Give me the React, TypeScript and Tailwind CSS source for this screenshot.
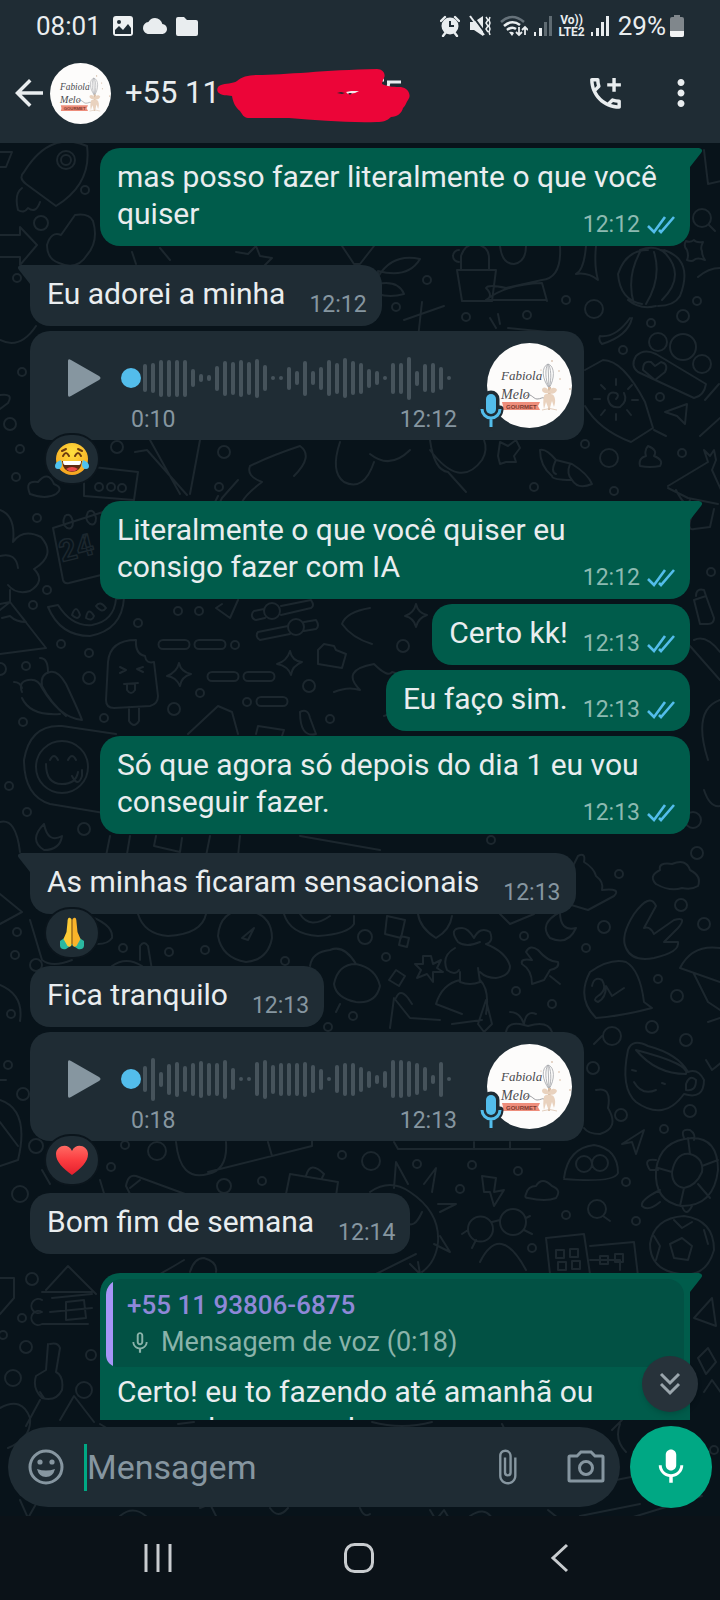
import React, { memo } from "react";
import clsx from "clsx";
import {
  MdArrowBack,
  MdAttachFile,
  MdCloud,
  MdMic,
  MdMicNone,
  MdMoreVert,
  MdOutlineAddIcCall,
} from "react-icons/md";

type Reaction = "laugh" | "pray" | "heart";

interface Message {
  id: number;
  out?: boolean;
  text?: string;
  time: string;
  tail?: boolean;
  gap: "tight" | "wide" | "afterReaction" | "turnAfterReaction";
  voice?: { duration: string; bars: number[] };
  quote?: { author: string; text: string };
  reaction?: Reaction;
}

const messages: Message[] = [
  { id: 1, out: true, tail: true, gap: "tight", text: "mas posso fazer literalmente o que você quiser", time: "12:12" },
  { id: 2, tail: true, gap: "wide", text: "Eu adorei a minha", time: "12:12" },
  {
    id: 3,
    gap: "tight",
    time: "12:12",
    voice: {
      duration: "0:10",
      bars: [28, 30, 37, 37, 37, 37, 18, 8, 6, 25, 35, 33, 37, 33, 39, 26, 4, 4, 23, 14, 35, 14, 23, 36, 31, 40, 34, 31, 19, 14, 4, 31, 31, 43, 15, 28, 30, 23, 4],
    },
    reaction: "laugh",
  },
  { id: 4, out: true, tail: true, gap: "turnAfterReaction", text: "Literalmente o que você quiser eu consigo fazer com IA", time: "12:12" },
  { id: 5, out: true, gap: "tight", text: "Certo kk!", time: "12:13" },
  { id: 6, out: true, gap: "tight", text: "Eu faço sim.", time: "12:13" },
  { id: 7, out: true, gap: "tight", text: "Só que agora só depois do dia 1 eu vou conseguir fazer.", time: "12:13" },
  { id: 8, tail: true, gap: "wide", text: "As minhas ficaram sensacionais", time: "12:13", reaction: "pray" },
  { id: 9, gap: "afterReaction", text: "Fica tranquilo", time: "12:13" },
  {
    id: 10,
    gap: "tight",
    time: "12:13",
    voice: {
      duration: "0:18",
      bars: [26, 43, 15, 31, 35, 26, 33, 37, 33, 33, 39, 22, 4, 4, 34, 39, 29, 33, 33, 33, 35, 28, 21, 4, 28, 33, 33, 25, 17, 9, 17, 38, 38, 36, 32, 24, 9, 35, 4],
    },
    reaction: "heart",
  },
  { id: 11, gap: "afterReaction", text: "Bom fim de semana", time: "12:14" },
  {
    id: 12,
    out: true,
    tail: true,
    gap: "wide",
    quote: { author: "+55 11 93806-6875", text: "Mensagem de voz (0:18)" },
    text: "Certo! eu to fazendo até amanhã ou segunda eu mando",
    time: "12:14",
  },
];

const gapClass = {
  tight: "mt-[5px]",
  wide: "mt-[19px]",
  afterReaction: "mt-[9px]",
  turnAfterReaction: "mt-[18px]",
};

/* ---------- wallpaper ---------- */

const smallDots = [
  [85, 190], [427, 280], [396, 307], [466, 317], [527, 315], [566, 300], [697, 301], [651, 323], [623, 350], [660, 397],
  [585, 444], [682, 453], [178, 611], [199, 611], [138, 623], [61, 644], [89, 653], [26, 666], [104, 718], [200, 693],
  [330, 719], [23, 722], [47, 590], [37, 518], [33, 605], [9, 786], [27, 812], [219, 487], [534, 487], [614, 491],
  [711, 572], [491, 840], [619, 874], [586, 948], [524, 936], [386, 957], [516, 991], [552, 1004], [658, 979],
  [664, 1129], [417, 1164], [472, 1165], [518, 1171], [460, 1189], [626, 1182], [566, 1215], [636, 1221], [532, 1248],
  [17, 278], [22, 372], [20, 449], [16, 477], [17, 932], [15, 955], [123, 948], [169, 952], [205, 950], [285, 961],
  [11, 1014], [353, 1016], [328, 1027], [8, 1065], [125, 1145], [342, 1155], [111, 1167], [262, 1181], [22, 1318],
  [714, 1450], [235, 645], [247, 702], [3, 1335],
];

const bigDots = [
  [41, 223, 7], [594, 309, 9], [683, 316, 6], [658, 342, 9], [683, 347, 13], [702, 364, 9], [609, 458, 9], [89, 678, 6],
  [174, 709, 6], [309, 686, 6], [84, 829, 6], [0, 669, 6], [403, 646, 6], [693, 820, 8], [697, 853, 6], [681, 905, 6],
  [704, 924, 6], [604, 927, 6], [365, 937, 7], [677, 996, 6], [652, 1027, 6], [686, 1040, 6], [593, 1068, 6],
  [621, 1115, 6], [690, 1111, 6], [371, 1161, 9], [117, 447, 6], [224, 452, 6], [10, 424, 6], [36, 965, 6], [23, 1094, 6],
  [36, 1146, 7], [157, 1151, 9], [224, 1186, 7], [20, 1194, 8], [32, 1279, 6], [13, 1378, 8], [84, 1390, 8], [91, 1355, 5],
  [26, 1347, 6],
];

const doodles = [
  // rocket and its flame
  "M24 172Q18 178 26 184L56 206Q92 184 87 146Q50 130 24 172M22 188q-8 6 -4 22q6 4 10 -2q8 6 12 -6",
  "M0 152h12l-6 15h-6M0 235h20v-8l17 18l-17 20v-8h-20M47 245q4 -14 14 -10l14 -20q14 -2 18 6q6 20 -6 34q-10 16 -28 8q-12 -4 -12 -18",
  "M132 252l4 12M160 248l10 12M236 252l12 2l8 -8l4 10l12 2l-8 8l2 8M342 246l12 18l6 0l14 -18",
  "M378 277q14 -24 42 -18q-12 20 -42 12zM378 284q20 -4 26 10q-14 4 -26 0",
  // cactus pot and reaching arm
  "M457 270h39l-4 31h-30zM461 270v-14q4 -12 14 -12q14 2 14 14v12M459 250a6 6 0 1 0 0 12M546 300h-60q20 -16 56 -17l5 18M560 246q2 32 -18 34l-36 8q-18 -4 -20 0q8 8 0 12",
  "M586 246q-2 24 -10 28q12 -2 22 6q-4 -14 -2 -34M500 246q2 18 14 18q12 -2 12 -18",
  // lantern
  "M648 250q-22 0 -30 24q2 26 24 30M640 252q-14 26 -6 52M654 252q8 26 -8 52M662 250q26 24 0 50M664 250q30 10 16 46q-6 10 -22 10M640 250q16 -6 26 4M628 300q12 10 28 6M630 318q-14 20 -30 18q-2 4 2 8q26 -8 30 -26",
  "M698 277q14 -12 30 -8M404 320l40 -14M422 302l-4 36M490 318l6 10M498 314l2 10M508 328l40 4",
  // mitten with a heart
  "M636 356q-6 10 2 16l56 26q10 -2 12 -14l-50 -30q-12 -6 -20 2M655 380l-12 -10q0 -10 8 -8l4 4l6 -4q8 2 4 10z",
  // kite with a spiral sun
  "M585 370l18 -10q20 0 42 42l8 26l-22 14q-32 -12 -46 -36M616 399q4 -4 0 -6q-8 -2 -8 6q2 10 12 8q8 -6 4 -14M616 385v-6M628 389l4 -4M632 400h6M627 410l4 5M616 414v6M605 410l-4 5M600 399h-6M605 389l-4 -4M654 430l12 6",
  "M665 412l22 -8l-2 20l-8 -8zM700 436l20 -18M705 400l14 -16",
  "M540 450q6 -2 16 10l16 4q16 10 20 20q-14 6 -20 -4q-20 0 -20 -4q-12 -10 -12 -26M556 460q-6 12 0 14M570 464q-4 10 2 16",
  "M640 466q-2 -8 6 -10q-2 -6 2 -10q10 4 6 10q10 4 6 10q-10 2 -20 0M668 486l40 -24l-4 -12l6 6l4 -6l2 10l-4 10l10 22",
  "M500 442l8 4l8 -6l4 8l-6 8l2 6l-10 0l-6 2l-2 -8z",
  "M340 442q-10 30 4 40q20 10 30 -20M430 450q30 40 52 10q6 -10 2 -20M410 450q-20 20 -40 4M430 440q4 30 18 32l18 20",
  // cake box and hands
  "M135 452l12 -2l40 45M150 440l30 54M200 440l-10 54M84 466l54 6l-4 28l-50 -4zM95 487a4 4 0 1 0 8 0a4 4 0 1 0 -8 0M107 487a4 4 0 1 0 8 0a4 4 0 1 0 -8 0M118 488a4 4 0 1 0 8 0a4 4 0 1 0 -8 0",
  "M250 466q20 -10 50 -20q14 10 -6 30M250 466q-4 10 12 16q-16 12 -20 20M0 395q14 -2 8 8l-8 6M0 340q20 10 36 -14",
  "M30 494q-6 -14 8 -12q10 -12 16 2q10 4 2 10q-10 6 -26 0",
  // calendar
  "M53 528l50 -16M53 528l10 52q1 4 6 3l36 -9M65 516q6 -4 8 6q0 8 -6 6q-6 -4 -2 -12M88 512q6 -4 8 6q0 8 -6 6q-6 -4 -2 -12",
  "M0 510q16 6 13 32q10 -14 28 -5q16 18 -7 32q12 12 -4 22q-14 4 -22 -6M0 556q16 -4 18 12M10 590v12",
  // watermelon and mountain
  "M48 607l10 -2q14 22 34 20q22 -4 24 -26l8 -1q-2 32 -34 38q-30 0 -42 -29M72 615q4 -12 8 0q-2 6 -8 0M86 618q2 -12 8 -2q-2 6 -8 2M96 606q4 -6 10 2q-4 6 -10 -2",
  "M0 604l10 -2l36 46l-46 6M10 602l-10 8M10 602l16 20q-10 0 -16 -6l-8 2",
  // popsicle
  "M136 640q-26 0 -28 22l-2 38q0 8 8 8l36 -2q8 -2 8 -10l-4 -34q-8 2 -9 -6q-10 -2 -9 -16zM129 707v14q5 8 10 0v-14M120 667l6 3l-6 3M143 667l-6 2l6 3M124 684l14 -1M127 684v6q4 6 8 0v-6",
  "M163 640h22a4 4 0 0 1 0 9h-22a4 4 0 0 1 0 -9M199 640h22a4 4 0 0 1 0 9h-22a4 4 0 0 1 0 -9M212 672h22a4 4 0 0 1 0 9h-22a4 4 0 0 1 0 -9M248 672h22a4 4 0 0 1 0 9h-22a4 4 0 0 1 0 -9M261 697h22a4 4 0 0 1 0 9h-22a4 4 0 0 1 0 -9",
  "M264 609l-10 2a5 5 0 0 0 2 9l9 -2M281 606l30 -6q4 6 0 8l-30 7M264 611a8 8 0 1 0 16 0a8 8 0 1 0 -16 0M288 626l-30 6a5 5 0 0 0 2 8l30 -6M304 622l12 -2q4 6 0 9l-12 2M288 627a8 8 0 1 0 16 0a8 8 0 1 0 -16 0",
  "M179 663q2 9 12 11q-10 3 -11 12q-4 -9 -13 -10q10 -4 12 -13M290 651q2 10 12 11q-10 4 -11 13q-3 -9 -14 -11q10 -3 13 -13M416 604q2 9 11 11q-9 3 -11 12q-2 -9 -11 -11q9 -3 11 -12M694 240q2 3 9 2q-3 6 -1 9q0 5 3 9q-8 -3 -11 0q-2 2 -7 0q2 -4 0 -10q-4 -4 -1 -9q4 2 8 -1",
  // peppers
  "M22 692q-4 -10 6 -12q10 -2 14 8q18 30 40 32q-2 -6 -16 -36q-8 -14 -16 -12q-10 2 -8 14q8 16 24 30M40 658q8 0 8 14M14 682q6 0 8 6M22 698q8 18 38 16",
  "M218 496l-4 8l-2 14l10 -20l16 -18M222 604l-6 4l14 10l8 -18M318 650l6 -6l10 2l2 4l10 4l-4 14l-24 -4zM370 608q-24 4 -28 16q10 14 30 20",
  // laughing badge
  "M116 734l-54 -8q-32 -2 -38 34q0 36 26 44l60 10M36 767a26 26 0 1 0 52 0a26 26 0 1 0 -52 0M46 764q0 20 16 20q14 0 16 -12M50 760q4 -8 8 0M68 760q4 -8 8 0M72 776q6 12 10 0v-6",
  "M188 734l30 -28l14 6l6 22M256 734l2 -8l26 4l-2 6M300 712q8 -4 10 6l6 16q-16 4 -16 -22M334 692q14 -6 26 -2q-20 -20 14 -26q14 14 18 8q22 4 12 28q-10 14 -20 16",
  "M44 824q-16 16 0 26q16 0 18 -14q-14 8 -18 -12M0 822q16 -4 20 30M156 836l-2 10l26 6l2 -14M110 836l-4 20M130 836l-4 24M210 836l-4 20M240 836l-2 20M300 836l80 14",
  // right edge objects
  "M694 600l12 -4l8 22q0 6 -6 6l-8 0zM696 596q0 -8 8 -6l2 6M690 646l30 34M694 640q12 -6 26 12M720 700q-28 10 -12 60M704 790q6 18 16 16M692 515q-6 16 2 14l16 -2l4 -18",
  "M676 490q10 20 14 10M668 488l20 10l30 6M704 150l4 34l18 -4",
  // thumbs and clouds
  "M570 872l8 -16q8 -4 6 6q10 6 12 14q8 6 6 14q20 -2 12 6l-26 14l-20 -6M656 884q-8 -8 4 -14q-2 -8 12 -6q14 -6 18 6q12 6 8 16q-6 4 -16 2q-12 4 -26 -4",
  "M560 912q-22 12 -10 26q18 8 26 -10q-16 4 -16 -16M526 952q4 -8 12 -2q10 12 20 12q2 6 -8 8l-6 10l-12 4q0 -14 -10 -20q-2 -6 10 -4zM550 976l10 8",
  "M626 948q-6 -12 8 -34q16 -22 22 -8l-12 22q6 -2 10 6l20 -14q14 -4 4 8l-14 14l14 0q2 10 -24 16q-22 4 -28 -10",
  "M590 972q20 -14 36 -10q14 8 18 40l8 6q-30 8 -56 10q-20 -20 -6 -46M592 986q2 -10 10 -6q6 10 -4 16q-6 4 0 6q8 -4 8 -16l6 10l12 -8",
  "M680 968q12 -24 40 -20M680 968l40 14M694 974l14 28l12 8M708 1022l12 -4",
  // cup
  "M628 1050q4 -12 20 -4q30 8 40 26q10 -4 16 8q0 20 -20 14q-20 28 -48 8q-16 -14 -8 -52M636 1050q20 24 50 24q4 -10 -50 -24M632 1070l4 1M662 1083l3 1M634 1082q8 14 22 8M686 1084q4 -10 10 -4q0 12 -10 10z",
  "M602 1036l-8 8M603 1036a9 9 0 1 0 18 0a9 9 0 1 0 -18 0M596 1090q16 -4 12 18q12 20 -8 26q-12 0 -16 -6M706 1060l6 10l10 -8M622 1144l22 -14l-8 24l-4 -12z",
  // ghost
  "M564 1178q4 -30 30 -33q24 4 24 28q-4 10 -54 6M576 1164a8 8 0 1 0 16 0a8 8 0 1 0 -16 0M592 1163a8 8 0 1 0 16 0a8 8 0 1 0 -16 0",
  // turtle
  "M656 1170q4 -30 36 -32q26 0 26 32q-4 36 -36 36q-28 -4 -26 -36M672 1172q4 -20 18 -18q14 4 12 18q-6 14 -18 16q-12 -2 -12 -16M672 1172l-14 -4M690 1154l-2 -16M702 1166l16 -6M684 1188l-4 18M698 1184l12 14M684 1138q-4 -10 6 -8q6 4 4 10M656 1160q-14 -2 -6 10h8M660 1190q-20 10 -18 16q6 6 18 -4M682 1206q4 12 10 0",
  "M482 1176l14 2l-2 14l10 -2l-10 16l-4 -14l-6 0zM526 1194q2 -8 10 -8q6 -10 16 0q10 4 4 12q-10 4 -28 0q-4 0 -2 -4M588 1209a9 9 0 1 0 18 0a9 9 0 1 0 -18 0M603 1216l7 5",
  // glasses
  "M468 1229a12 12 0 1 0 25 0a12 12 0 1 0 -25 0M500 1222a13 13 0 1 0 26 0a13 13 0 1 0 -26 0M492 1222l8 -2M468 1230l-6 4M476 1240l-4 8M526 1218l4 -2M524 1230l8 4",
  // sun
  "M370 1192q20 -14 40 0q30 20 28 50q-2 20 -16 30M394 1188l2 -26l12 22M424 1184l12 -16l-4 24M438 1204l18 0l-16 8M440 1236l10 16l-16 -8M418 1262l2 12l-10 -10M406 1222q8 8 16 -10",
  // ball and buildings
  "M650 1244q4 -26 34 -28q30 4 30 34q-8 28 -34 24q-30 -4 -30 -30M670 1244l12 -6l10 8l-4 14l-14 -2zM674 1220l8 8l10 -6M654 1236l6 10l-4 14M704 1230l4 14",
  "M550 1274l-4 -36l38 -4l6 40M590 1246l44 -4l4 34M556 1250h8v8h-8zM570 1249h8v8h-8zM558 1262h8v8h-8zM572 1261h8v8h-8zM600 1256h8v8h-8zM615 1254h8v8h-8zM480 1262q20 -40 46 8",
  // girl with flowers
  "M455 948q-14 8 -8 22q8 6 12 0M458 942q-10 -14 4 -14q6 0 12 10q6 -12 16 -6q4 10 -4 12q20 8 24 22q0 10 -14 12q-10 0 -16 -6M458 942q8 6 22 0M460 972l0 10q10 4 20 0l-2 -14M460 980q-18 4 -24 24l26 10M480 980q10 10 6 34M440 1020l-30 -2l-16 -20l-4 30M486 1000l6 24l-8 8l-6 -8zM396 998q4 -10 12 0l4 6M452 1024l30 -4",
  "M431 956l2 8l8 -4l-4 8l6 4l-10 0l0 10l-6 -8l-10 4l4 -8l-6 -6l8 0l0 -8zM387 916l18 4l-4 18l-16 -4zM401 936l8 2l-2 9l-8 -2zM396 970l9 6l-6 10l-10 -6zM506 1032q2 -10 14 -8l8 2q20 -6 24 6M510 1012q10 0 14 12q2 -14 12 -10",
  "M418 914q2 14 18 24q14 -8 16 -22M500 914l10 10l24 -10M284 914q6 20 34 22q30 -2 36 -12v-8M300 914q10 16 30 2",
  // stopwatch, dumplings
  "M218 936q2 -26 28 -26q26 4 26 28q-4 22 -26 24q-24 -4 -28 -26M242 938l12 -10l-6 12zM138 914q6 20 30 22q34 -2 38 -22M84 914q30 10 28 24q-4 6 -14 6M30 920l12 40q10 8 30 0",
  "M310 966q2 -14 20 -16q14 -6 26 14M334 984q4 -20 22 -20q20 4 24 22q-4 18 -24 16q-20 -4 -22 -18M336 1012l4 -8M140 960v-14q4 -6 8 0l4 24M112 966q14 -10 30 0",
  "M0 894l22 18l-22 12M0 985q24 10 20 36M0 1100q30 10 18 60l-18 6M0 1122l18 24M0 1080h6",
  "M176 1142q4 40 32 32q20 -4 18 -32M208 1172l104 -26v-6M268 1142l4 14M394 1142l4 7h142M474 1142v7M510 1142v7",
  "M126 1186q2 -12 10 -10l60 22M126 1186l8 16M140 1180l-10 8M286 1194l4 -20l48 8l-2 14M306 1176q4 -16 18 -2l-2 4M42 1170l8 14M100 1180l6 20",
  // cabin and keys
  "M46 1290l22 -24l28 28M42 1292h50M42 1300a7 7 0 1 0 0 12a7 7 0 1 0 0 12h46M52 1298l40 -4M50 1312l42 -4M66 1302l18 -2l2 18l-20 2zM0 1278h14v20l-14 16",
  "M50 1344q8 -2 10 4l-4 24q8 4 6 18q-6 12 -20 8q-10 -10 -6 -22l10 -6l2 -26M0 1408q22 -12 30 10q2 20 -22 30M40 1400l-14 26M40 1392l4 6M60 1420l14 -24l20 26",
  "M160 1274l14 -8l10 -6M190 1272q4 -14 14 -14q14 4 12 14M376 1274l40 -20M694 1318l18 -20l4 28zM698 1358l10 -10l8 14l-10 12zM704 1392l8 -12l10 14M590 1260h30v10",
  // strip around the composer
  "M20 1500l8 18l8 -14l10 0M120 1516q14 -12 28 2M200 1508l10 -4l6 12M270 1508q8 12 18 0M360 1508q4 10 10 6M430 1510l6 10l8 -10l6 10M470 1516q14 -10 22 2M548 1510l10 8M580 1516l60 -12M630 1518l72 -22M100 1424l10 6M178 1424l16 -2M372 1422q30 8 60 0M502 1424l4 8M612 1430l10 -10M620 1424q-6 16 6 28M616 1480l20 -4",
];

const Wallpaper = memo(() => (
  <svg
    className="absolute inset-0 h-full w-full"
    viewBox="0 143 720 1373"
    preserveAspectRatio="xMidYMin slice"
    fill="none"
    stroke="#1c272e"
    strokeWidth="2"
    strokeLinecap="round"
    strokeLinejoin="round"
    aria-hidden="true"
  >
    <circle cx="66" cy="160" r="9" />
    <circle cx="66" cy="160" r="5" />
    {smallDots.map(([x, y]) => (
      <circle key={`${x}-${y}`} cx={x} cy={y} r="4" />
    ))}
    {bigDots.map(([x, y, r]) => (
      <circle key={`${x}-${y}`} cx={x} cy={y} r={r} />
    ))}
    <circle cx="702" cy="218" r="9" />
    <path d="M709 225l6 6" />
    {doodles.map((d) => (
      <path key={d} d={d} />
    ))}
    <text x="62" y="562" fontSize="30" fontWeight="700" strokeWidth="1.500" transform="rotate(-14 62 562)">24</text>
  </svg>
));

Wallpaper.displayName = "Wallpaper";

/* ---------- drawings ---------- */

const Logo = ({ className }: { className?: string }) => (
  <svg viewBox="0 0 85 85" className={className} role="img" aria-label="Fabiola Melo Gourmet">
    <circle cx="42.5" cy="42.5" r="42.5" fill="#fdfcfb" />
    <g fill="#4a4a4e" fontFamily="Liberation Serif, serif" fontStyle="italic">
      <text x="14" y="37" fontSize="13">Fabiola</text>
      <text x="14" y="56" fontSize="14">Melo</text>
    </g>
    <path d="M38 54c5-6 8 2 12 2s5-2 7-1" fill="none" stroke="#85858a" strokeWidth="0.8" />
    <path d="M15 59h38l-2 4 2 4H15l1-4z" fill="#ee8d7b" />
    <text x="19" y="65.5" fontSize="6" fontWeight="700" fill="#7d3a30" fontFamily="Liberation Sans, sans-serif">GOURMET</text>
    <g fill="none" stroke="#a9abb0" strokeWidth="0.9">
      <path d="M62 45c-7-9-8-21-1-24 7 2 7 15 1 24" />
      <path d="M62 45c-4-9-4-20-1-24 3 3 4 15 1 24M61 21l1 24" />
    </g>
    <path d="M61 44h3l-1 23h-2z" fill="#d8bda6" />
    <path d="M62 48c-3-5-7-4-7-1 0 2 3 4 7 3 3 2 7 0 8-3-1-3-6-3-8 1zM57 53c0-3 9-3 10 0 2 4 1 8 0 11l-2-6-3 9-3-8-2 7c-1-4-1-9 0-13z" fill="#e9d2be" />
    <path d="M55 67q8-3 15 0" stroke="#dcc3ae" strokeWidth="0.8" fill="none" />
    <g fill="#c9a789">
      <circle cx="65" cy="18" r="0.8" />
      <circle cx="72" cy="28" r="0.7" />
      <circle cx="73" cy="36" r="0.7" />
      <circle cx="54" cy="27" r="0.6" />
      <circle cx="83" cy="46" r="0.8" />
    </g>
  </svg>
);

const VoiceMic = () => (
  <svg viewBox="0 0 26 42" className="absolute -left-[9px] bottom-[-3px] h-[42px] w-[26px]" aria-hidden="true">
    <path d="M13 5a5 5 0 0 1 5 5v9a5 5 0 0 1-10 0v-9a5 5 0 0 1 5-5zM4 20a9 9 0 0 0 18 0M13 29v9" fill="none" stroke="#1f2c34" strokeWidth="7" strokeLinecap="round" />
    <rect x="8" y="5" width="10" height="20" rx="5" fill="#53bdeb" />
    <path d="M4 20a9 9 0 0 0 18 0M13 29v9" fill="none" stroke="#53bdeb" strokeWidth="3" />
  </svg>
);

const Ticks = () => (
  <svg viewBox="0 0 28 18" className="h-[18px] w-7" fill="none" stroke="#53bdeb" strokeWidth="2.6" aria-label="Lida">
    <path d="M1 10l6 6L18 1M12 14l2 2L27 1" />
  </svg>
);

const Emoji = ({ kind }: { kind: Reaction }) => {
  if (kind === "heart") {
    return (
      <svg viewBox="0 0 34 34" className="size-[34px]" role="img" aria-label="Coração">
        <defs>
          <linearGradient id="heartFill" x1="0" y1="0" x2="0" y2="1">
            <stop offset="0" stopColor="#ff6a63" />
            <stop offset="0.5" stopColor="#fb3c40" />
            <stop offset="1" stopColor="#e41f2d" />
          </linearGradient>
        </defs>
        <path d="M17 32C8 25 1 19 1 11 1 3 13-1 17 8c4-9 16-5 16 3 0 8-7 14-16 21z" fill="url(#heartFill)" />
      </svg>
    );
  }
  if (kind === "pray") {
    return (
      <svg viewBox="0 0 34 34" className="size-[34px]" role="img" aria-label="Mãos unidas">
        <path d="M5 25l6-4 6 8-6 4q-5 1-6-3z" fill="#2bb8a0" />
        <path d="M29 25l-6-4-6 8 6 4q5 1 6-3z" fill="#2bb8a0" />
        <path d="M16.500 3c-3-3-4 0-4 3l-1 10-3 7 4 7q4 2 4-2z" fill="#fdcb36" />
        <path d="M17.500 3c3-3 4 0 4 3l1 10 3 7-4 7q-4 2-4-2z" fill="#fbb32a" />
        <path d="M17 4v24" stroke="#e08d12" strokeWidth="1" fill="none" />
      </svg>
    );
  }
  return (
    <svg viewBox="0 0 34 34" className="size-[34px]" role="img" aria-label="Chorando de rir">
      <defs>
        <radialGradient id="faceFill" cx="0.5" cy="0.3" r="0.75">
          <stop offset="0" stopColor="#ffe03f" />
          <stop offset="1" stopColor="#f6a01d" />
        </radialGradient>
      </defs>
      <circle cx="17" cy="17" r="16" fill="url(#faceFill)" />
      <path d="M8 14q3-6 6 0M20 14q3-6 6 0M7 9l4-2M27 9l-4-2" fill="none" stroke="#6b3a10" strokeWidth="2" strokeLinecap="round" />
      <path d="M7 19h20q-1 11-10 11T7 19z" fill="#5c2a12" />
      <path d="M8 19h18q0 4-2 4H10q-2 0-2-4z" fill="#fff" />
      <path d="M11 27q6-4 12 0-6 5-12 0z" fill="#ea4a4a" />
      <path d="M6 18q-6 2-6 6 0 3 3 3 4 0 4-5zM28 18q6 2 6 6 0 3-3 3-4 0-4-5z" fill="#4fc3f0" />
    </svg>
  );
};

/* the marker scribble that hides the rest of the number */
const Scribble = () => (
  <svg viewBox="0 0 196 56" className="absolute -top-[3px] left-[90px] h-14 w-[196px]" aria-hidden="true">
    <path d="M172 14h14M174 14l-1 5M166 12h3" stroke="#e9edef" strokeWidth="3" fill="none" />
    <path d="M6 17C10 15 18 16 22 13 26 9 34 7 42 7 70 7 110 2 162 1c6 0 9 5 7 9-1 2-2 4-2 6 6 3 14 3 19 3 7 1 11 8 7 13-2 3-2 5-5 8-1 5-6 9-12 9-4 4-8 5-14 5-30 1-60-2-88-4H33c-4 0-6-4-8-7-5-4-7-9-8-15-5-1-10 0-13-3-3-2-2-7 2-8z" fill="#ec0538" />
    <path d="M131 24l5-1 8 0-4 2-7 1z" fill="#f4e7ea" />
    <path d="M122 25l4-1 4 1-3 1zM133 25l2 2 2-2z" fill="#26262b" />
  </svg>
);

/* ---------- header ---------- */

const StatusBar = () => (
  <div className="flex h-[52px] items-center justify-between pl-9 pr-[36px] text-[26px] text-[#e9edef]">
    <div className="flex items-center">
      <span>08:01</span>
      <svg viewBox="0 0 20 20" className="ml-3 size-5" aria-hidden="true">
        <rect width="20" height="20" rx="3" fill="#eef1f2" />
        <path d="M2 14l4-4 4 4 5-6 3 4v6H2z" fill="#1f2c34" />
        <circle cx="6" cy="6" r="2" fill="#1f2c34" />
      </svg>
      <MdCloud className="ml-[10px] size-6" />
      <svg viewBox="0 0 22 19" className="ml-[9px] h-[19px] w-[22px]" fill="currentColor" aria-hidden="true">
        <path d="M0 2q0-2 2-2h6l3 3h9q2 0 2 2v12q0 2-2 2H2q-2 0-2-2z" />
      </svg>
    </div>
    <div className="flex items-center">
      <svg viewBox="0 0 20 22" className="h-[22px] w-5" aria-hidden="true">
        <circle cx="10" cy="11" r="8.500" fill="currentColor" />
        <path d="M1 6l4-4M19 6l-4-4M3 21l3-4M17 21l-3-4" stroke="currentColor" strokeWidth="2.400" strokeLinecap="round" />
        <path d="M10 6v5h4" stroke="#1f2c34" strokeWidth="2" fill="none" />
      </svg>
      <svg viewBox="0 0 22 22" className="ml-[9px] size-[22px]" aria-hidden="true">
        <path d="M1 7h4l9-6v20l-9-6H1z" fill="currentColor" />
        <path d="M3 0l14 19" stroke="#1f2c34" strokeWidth="2" />
        <path d="M1 1l14 19" stroke="currentColor" strokeWidth="2" />
        <path d="M17 2l2 3-2 3 2 3-2 3 2 3M21 2l-1 3 1 3-1 3 1 3-1 3 1 3" stroke="currentColor" strokeWidth="1.500" fill="none" />
      </svg>
      <svg viewBox="0 0 28 22" className="ml-[9px] h-[22px] w-7" fill="none" strokeWidth="2.600" aria-hidden="true">
        <path d="M1 7q11-10 23 0" stroke="#66727a" />
        <path d="M4 11q8-7 16-1M7 15q5-4 9-1" stroke="currentColor" />
        <path d="M9 17l3 4 2-3q-2-2-5-1z" fill="currentColor" />
        <path d="M19 12v8M16 17l3 3 3-3M25 20v-7M22 15l3-3 3 3" stroke="currentColor" strokeWidth="1.800" />
      </svg>
      <svg viewBox="0 0 18 20" className="ml-[6px] h-5 w-[18px]" aria-hidden="true">
        <path d="M0 16h2v4H0zM5 12h3v8H5z" fill="currentColor" />
        <path d="M10 6h3v14h-3zM15 0h3v20h-3z" fill="#5f6b72" />
      </svg>
      <span className="ml-[6px] flex flex-col items-center text-[12px] leading-3 font-bold">
        <span>Vo))</span>
        <span>LTE2</span>
      </span>
      <svg viewBox="0 0 18 20" className="ml-[6px] h-5 w-[18px]" fill="currentColor" aria-hidden="true">
        <path d="M0 16h2v4H0zM5 12h3v8H5zM10 6h3v14h-3zM15 0h3v20h-3z" />
      </svg>
      <span className="ml-[9px]">29%</span>
      <svg viewBox="0 0 14 22" className="ml-1 h-[22px] w-[14px]" aria-hidden="true">
        <path d="M4 0h6v2h2q2 0 2 2v16q0 2-2 2H2q-2 0-2-2V4q0-2 2-2h2z" fill="#80878c" />
        <path d="M0 16h14v4q0 2-2 2H2q-2 0-2-2z" fill="#f1f3f4" />
      </svg>
    </div>
  </div>
);

const ChatHeader = () => (
  <header className="bg-[#1f2c34] pb-[9px]">
    <StatusBar />
    <div className="flex h-[82px] items-center pl-2 pr-[18px] text-[#e9edef]">
      <button type="button" aria-label="Voltar">
        <MdArrowBack className="size-[42px]" />
      </button>
      <Logo className="size-[61px]" />
      <div className="relative ml-[14px] flex-1">
        <h1 className="text-[31px] leading-[44px]">+55 11</h1>
        <Scribble />
      </div>
      <button type="button" aria-label="Adicionar chamada">
        <MdOutlineAddIcCall className="size-[41px]" />
      </button>
      <button type="button" aria-label="Mais opções" className="ml-[34px]">
        <MdMoreVert className="size-[42px]" />
      </button>
    </div>
  </header>
);

/* ---------- messages ---------- */

const VoiceNote = ({ duration, time, bars }: { duration: string; time: string; bars: number[] }) => (
  <div className="flex h-[109px] items-start pl-[37px] pr-3">
    <button type="button" aria-label="Reproduzir" className="mt-7">
      <svg viewBox="0 0 34 38" className="h-[38px] w-[34px]" fill="#8696a0">
        <path d="M1 2q0-3 3-1l28 16q3 2 0 4L4 37q-3 2-3-1z" />
      </svg>
    </button>
    <div className="ml-5 w-[336px] pt-[25px]">
      <div className="relative flex h-11 items-center gap-1 pl-[22px]">
        {bars.map((h, i) => (
          <span key={i} className="w-1 rounded-full bg-[#46535b]" style={{ height: h }} />
        ))}
        <input
          type="range"
          aria-label="Posição do áudio"
          min={0}
          max={100}
          defaultValue={0}
          className="absolute inset-0 h-full w-full appearance-none bg-transparent [&::-webkit-slider-thumb]:size-5 [&::-webkit-slider-thumb]:appearance-none [&::-webkit-slider-thumb]:rounded-full [&::-webkit-slider-thumb]:bg-[#53bdeb]"
        />
      </div>
      <div className="mt-[6px] flex justify-between pl-[10px] text-[23px] leading-7 text-[#8696a0]">
        <span>{duration}</span>
        <span>{time}</span>
      </div>
    </div>
    <div className="relative ml-[30px] mt-3">
      <Logo className="size-[85px]" />
      <VoiceMic />
    </div>
  </div>
);

const Quote = ({ author, text }: { author: string; text: string }) => (
  <blockquote className="mx-[6px] flex overflow-hidden rounded-t-2xl rounded-bl-xl bg-[#025144] text-[26px] leading-[37px]">
    <span className="w-[7px] bg-[#a695f7]" />
    <div className="pt-2 pb-[6px] pl-[14px]">
      <p className="font-medium text-[#8f88d8]">{author}</p>
      <p className="flex items-center text-[27px] text-[#8ab3aa]">
        <MdMicNone className="size-[26px]" />
        <span className="ml-2">{text}</span>
      </p>
    </div>
  </blockquote>
);

const Tail = ({ out }: { out?: boolean }) => (
  <svg
    viewBox="0 0 30 22"
    className={clsx("absolute top-0 h-[22px] w-[30px]", out ? "-right-[13px] text-[#005c4b]" : "-left-[13px] -scale-x-100 text-[#1f2c34]")}
    fill="currentColor"
    aria-hidden="true"
  >
    <path d="M0 0h26q5 1 2 5L17 19V22H0z" />
  </svg>
);

const MessageItem = memo<Message>(({ out, text, time, tail, gap, voice, quote, reaction }) => (
  <li className={clsx("flex flex-col", gapClass[gap], out ? "items-end pl-[70px]" : "items-start pr-[70px]")}>
    <div className={clsx("relative rounded-[20px]", out ? "bg-[#005c4b]" : "bg-[#1f2c34]", tail && (out ? "rounded-tr-none" : "rounded-tl-none"), quote && "pt-[6px]")}>
      {tail && <Tail out={out} />}
      {quote && <div className="relative"><Quote {...quote} /></div>}
      {voice && <VoiceNote duration={voice.duration} bars={voice.bars} time={time} />}
      {text && (
        <div className={clsx("relative flow-root pl-[17px] pb-[7px] text-[30px] leading-[37px] text-[#e9edef]", out ? "pr-[15px]" : "pr-[15px]", quote ? "pt-[6px]" : "pt-[10px]")}>
          {text}
          <span
            className={clsx(
              "float-right mt-4 flex items-center gap-[7px] text-[23px] leading-7",
              out ? "ml-[15px] text-[#8dbab1]" : "ml-6 text-[#8696a0]"
            )}
          >
            <time>{time}</time>
            {out && <Ticks />}
          </span>
        </div>
      )}
    </div>
    {reaction && (
      <button
        type="button"
        aria-label="Ver reações"
        className="relative -mt-[5px] ml-[16px] flex h-12 w-[52px] items-center justify-center rounded-full bg-[#1f2c34] ring-2 ring-[#0b151c]"
      >
        <Emoji kind={reaction} />
      </button>
    )}
  </li>
));

MessageItem.displayName = "MessageItem";

/* ---------- footer ---------- */

const Composer = () => (
  <form className="relative flex items-center gap-[10px] px-2 pt-[6px] pb-2" onSubmit={(e) => e.preventDefault()}>
    <div className="flex h-20 min-w-0 flex-1 items-center rounded-full bg-[#1f2c34] pl-5 pr-[14px] text-[#8696a0]">
      <button type="button" aria-label="Emojis" className="shrink-0">
        <svg viewBox="0 0 36 36" className="size-9">
          <circle cx="18" cy="18" r="16" fill="none" stroke="currentColor" strokeWidth="3" />
          <circle cx="12" cy="13" r="2.600" fill="currentColor" />
          <circle cx="24" cy="13" r="2.600" fill="currentColor" />
          <path d="M9 20q9 3 18 0-2 8-9 8t-9-8z" fill="currentColor" />
        </svg>
      </button>
      <span className="ml-5 h-[47px] w-[3px] shrink-0 bg-[#00a884]" />
      <input
        type="text"
        aria-label="Mensagem"
        placeholder="Mensagem"
        className="h-full min-w-0 flex-1 bg-transparent text-[34px] text-[#e9edef] outline-none placeholder:text-[#8696a0]"
      />
      <button type="button" aria-label="Anexar" className="shrink-0">
        <MdAttachFile className="size-[38px]" />
      </button>
      <button type="button" aria-label="Câmera" className="ml-10 shrink-0">
        <svg viewBox="0 0 40 36" className="h-9 w-10" fill="none" stroke="currentColor" strokeWidth="3">
          <path d="M4 7h7l4-4h10l4 4h7q1 0 1 1v23q0 1-1 1H4q-1 0-1-1V8q0-1 1-1z" />
          <circle cx="20" cy="19" r="6.500" />
        </svg>
      </button>
    </div>
    <button type="button" aria-label="Gravar áudio" className="flex size-[82px] shrink-0 items-center justify-center rounded-full bg-[#00a884] text-white">
      <MdMic className="size-[42px]" />
    </button>
  </form>
);

const NavBar = () => (
  <nav className="flex h-[84px] items-center justify-around bg-[#0b1218] pl-[58px] pr-[60px] text-[#c9cccf]">
    <button type="button" aria-label="Recentes">
      <svg viewBox="0 0 28 30" className="h-[30px] w-7" stroke="currentColor" strokeWidth="3">
        <path d="M2 1v28M14 1v28M26 1v28" />
      </svg>
    </button>
    <button type="button" aria-label="Início">
      <svg viewBox="0 0 30 30" className="size-[30px]" fill="none" stroke="currentColor" strokeWidth="3">
        <rect x="1.500" y="1.500" width="27" height="27" rx="9" />
      </svg>
    </button>
    <button type="button" aria-label="Voltar à tela anterior">
      <svg viewBox="0 0 28 30" className="h-[30px] w-7" fill="none" stroke="currentColor" strokeWidth="3">
        <path d="M21 2L7 15l14 13" />
      </svg>
    </button>
  </nav>
);

const App = () => (
  <div className="flex h-screen flex-col bg-[#08131a] font-['Roboto',sans-serif]">
    <ChatHeader />
    <main className="relative flex min-h-0 flex-1 flex-col overflow-hidden">
      <Wallpaper />
      <div className="relative min-h-0 flex-1">
        <ul className="h-full overflow-y-auto px-[30px] [scrollbar-width:none]">
          {messages.map((m) => (
            <MessageItem key={m.id} {...m} />
          ))}
        </ul>
        <button
          type="button"
          aria-label="Ir para o fim"
          className="absolute bottom-2 right-[22px] flex size-14 items-center justify-center rounded-full bg-[#27323a] shadow-md"
        >
          <svg viewBox="0 0 22 24" className="h-6 w-[22px]" fill="none" stroke="#9aa5ac" strokeWidth="3">
            <path d="M2 2l9 9 9-9M2 12l9 9 9-9" />
          </svg>
        </button>
      </div>
      <Composer />
    </main>
    <NavBar />
  </div>
);

export default App;
